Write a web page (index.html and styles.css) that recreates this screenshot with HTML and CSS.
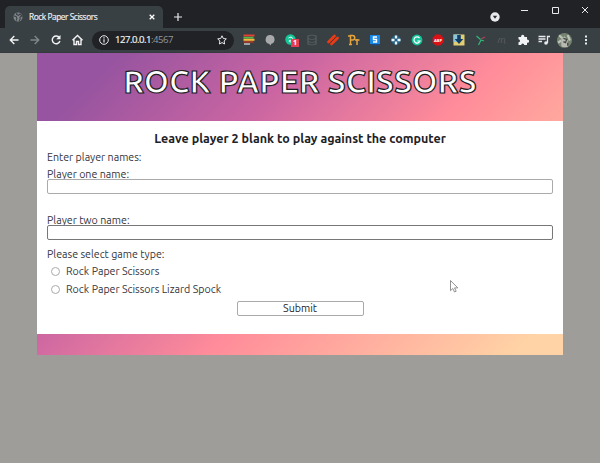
FILE: index.html
```html
<!DOCTYPE html>
<html lang="en">
<head>
<meta charset="utf-8">
<title>Rock Paper Scissors</title>
<link rel="stylesheet" href="styles.css">
</head>
<body>
<div class="browser">
  <div class="tabs">
    <div class="tab">
      <svg class="globe" viewBox="0 0 10 10"><circle cx="5" cy="5" r="4.5" fill="#80868b"/><path d="M1 4l2 .4 1 1.6-.8 2.6M4 .8l-.5 1.7 2 .8L7 2l2 2-2 1 .2 2L6 9" fill="none" stroke="#394043" stroke-width="1.1"/></svg>
      <span class="tab-title">Rock Paper Scissors</span>
      <svg class="close" viewBox="0 0 6 6"><path d="M.7.7l4.6 4.6M5.3.7L.7 5.3" stroke="#fff" stroke-width="1.3"/></svg>
    </div>
    <svg class="plus" viewBox="0 0 8 8"><path d="M4 0v8M0 4h8" stroke="#e8eaed" stroke-width="1.2"/></svg>
    <svg class="media" viewBox="0 0 10 10"><circle cx="5" cy="5" r="4.7" fill="#e8eaed"/><path d="M2.8 3.8h4.4L5 6.8z" fill="#292b2e"/></svg>
    <svg class="wincontrols" viewBox="0 0 70 8"><path d="M0 4.500h7M31.500 1.500h6v6h-6zM61 1l6 6M67 1l-6 6" fill="none" stroke="#e8eaed" stroke-width="1"/></svg>
  </div>
  <div class="toolbar">
    <svg class="nav" viewBox="0 0 78 12"><g fill="none" stroke-width="1.4"><path d="M9.5 6H1.5M5.3 2L1.3 6l4 4" stroke="#f1f3f4"/><path d="M21.500 6h8M25.700 2l4 4-4 4" stroke="#80868b"/><path d="M50.400 3.700A3.900 3.900 0 1 0 50.900 7" stroke="#f1f3f4"/><path d="M63.500 6.300L68.500 1.500l5 4.800M65 5.500v5h2.500v-3h2v3H72v-5" stroke="#f1f3f4"/></g><path d="M51.500 1v4.300h-4.300z" fill="#f1f3f4"/></svg>
    <div class="address">
      <svg class="info" viewBox="0 0 10 10"><circle cx="5" cy="5" r="4.300" fill="none" stroke="#e8eaed"/><path d="M5 4.300v3.200M5 2.300v1.200" stroke="#e8eaed" stroke-width="1.200"/></svg>
      <span class="host">127.0.0.1</span><span class="port">:4567</span>
      <svg class="star" viewBox="0 0 10 10"><path d="M5 .8l1.300 2.700 3 .4-2.200 2.100.5 3L5 7.600 2.400 9l.5-3L.7 3.900l3-.4z" fill="none" stroke="#e8eaed"/></svg>
    </div>
    <div class="extensions">
      <svg viewBox="0 0 12 12"><path d="M.5 1.500h11" stroke="#e34133" stroke-width="2"/><path d="M.5 3.700h10" stroke="#51b948" stroke-width="1.700"/><path d="M.5 5.800h11" stroke="#f5b83d" stroke-width="2"/><path d="M.5 7.900h10" stroke="#b63a25" stroke-width="1.500"/><path d="M1 10h6" stroke="#c4c4c4" stroke-width="1.500"/></svg>
      <svg viewBox="0 0 12 12"><path d="M6 1a4.500 4.500 0 0 0-1.200 8.800L7 11.500V9.900A4.500 4.500 0 0 0 6 1" fill="#a7a9ab"/></svg>
      <span class="badged"><svg viewBox="0 0 12 12"><circle cx="5.500" cy="5.500" r="5.200" fill="#14c596"/><path d="M3.500 4c3-2 5 0 3.500 1.500S4 6 4 7s2 1.500 3.500 0" fill="none" stroke="#fff"/></svg><b>1</b></span>
      <svg viewBox="0 0 12 12"><path d="M2 2c2-1 6-1 8 0v8c-2 1-6 1-8 0zM2 4.500c2 1 6 1 8 0M2 7.500c2 1 6 1 8 0" fill="none" stroke="#595d60" stroke-width="1.200"/></svg>
      <svg viewBox="0 0 12 12"><path d="M1.500 8L7.500 2M4.500 10L10.500 4" fill="none" stroke="#e83b17" stroke-width="2.700" stroke-linecap="round"/><path d="M3.500 8.500L8.500 3.500" stroke="#6b2418" stroke-width=".7"/></svg>
      <svg viewBox="0 0 12 12"><path d="M2.500 11V1.500h2c3 0 3 4.500 0 4.500h-2M7 6h4.500M9 5v6M0 2h3M1 10.500h3" fill="none" stroke="#e8a33b" stroke-width="1.500"/></svg>
      <svg viewBox="0 0 12 12"><path d="M1 1h10v9H1z" fill="#1689e8"/><path d="M8 3H4.500v2.500h3V8H4" fill="none" stroke="#fff" stroke-width="1.400"/><path d="M2 10.800h9" stroke="#124d95"/></svg>
      <svg viewBox="0 0 12 12"><circle cx="6" cy="6" r="4.700" fill="#246083"/><path d="M6 1.500v3M6 7.500v3M1.500 6h3M7.500 6h3" stroke="#e8f5fa" stroke-width="2.300"/></svg>
      <svg viewBox="0 0 12 12"><circle cx="6" cy="6" r="5.400" fill="#15c39a"/><path d="M8.500 4A3.100 3.100 0 1 0 9 7H6.300" fill="none" stroke="#fff" stroke-width="1.200"/></svg>
      <svg viewBox="0 0 12 12"><path d="M3.800.6h4.400l3.200 3.200v4.400l-3.200 3.200H3.800L.6 8.200V3.800z" fill="#dc1015"/><text class="abp" x="6" y="7.600" text-anchor="middle">ABP</text></svg>
      <svg viewBox="0 0 12 12"><path d="M.5.5h11v11H.5z" fill="#e3ce71"/><path d="M.5.500H6V8H.5z" fill="#8bc6dc"/><path d="M4.200 1h3.600v4h2.500L6 10 1.700 5h2.500z" fill="#123e65"/></svg>
      <svg viewBox="0 0 12 12"><path d="M1.500 2l4 3.500M6 6l-2.500 5M6 6l3 1" fill="none" stroke="#30b878" stroke-width="1.200"/><path d="M6 5l4-2" stroke="#ad4158" stroke-width="1.200"/></svg>
      <svg viewBox="0 0 12 12"><path d="M2 9l1.500-5M3.200 5.500c2-2 3-1 2.500.5L5 9M5.800 5.500c2-2 3.500-1 3 .5L8 9h1.500" fill="none" stroke="#54585b"/></svg>
      <svg viewBox="0 0 12 12"><path d="M1.500 3h2.700a1.600 1.600 0 1 1 3 0H10v2.700a1.600 1.600 0 1 1 0 3V11H7.200a1.500 1.500 0 0 0-3 0H1.500V8.300a1.500 1.500 0 0 0 0-3z" fill="#f1f3f4"/></svg>
      <svg viewBox="0 0 12 12"><path d="M.5 2.500h7M.5 5h7M.5 7.500H4M9.500 9V2.500H12" fill="none" stroke="#e8eaed" stroke-width="1.300"/><circle cx="8" cy="9" r="1.800" fill="#e8eaed"/></svg>
      <svg class="avatar" viewBox="0 0 14 14"><circle cx="7" cy="7" r="7" fill="#758371"/><path d="M2 2l3 3M10 2l2 5M1 9l3-2" stroke="#bcc6b8" stroke-width="2"/><path d="M4 12V6l3-3 3 4v6H5z" fill="#b9b8b3"/><path d="M6 5l3 1-1 3-2-1M10 9v3" fill="none" stroke="#40453d" stroke-width="1.200"/></svg>
      <svg viewBox="0 0 12 12"><path d="M5 1.500h2v2H5zM5 5h2v2H5zM5 8.500h2v2H5z" fill="#e8eaed"/></svg>
    </div>
  </div>
</div>
<main class="page">
  <header class="banner"><h1>ROCK PAPER SCISSORS</h1></header>
  <form class="content">
    <h2>Leave player 2 blank to play against the computer</h2>
    <p class="intro">Enter player names:</p>
    <label class="field"><span>Player one name:</span><input class="text" type="text"></label>
    <label class="field second"><span>Player two name:</span><input class="text active" type="text"></label>
    <p class="game">Please select game type:</p>
    <label class="choice"><input type="radio" name="game"><span>Rock Paper Scissors</span></label>
    <label class="choice"><input type="radio" name="game"><span>Rock Paper Scissors Lizard Spock</span></label>
    <button type="button">Submit</button>
  </form>
</main>
<svg class="cursor" viewBox="0 0 9 13"><path d="M.5.5v10.200l2.300-2.200 1.700 3.500 1.700-.8-1.700-3.300h3.300z" fill="#fff" stroke="#777" stroke-width=".8"/></svg>
</body>
</html>
```
FILE: styles.css
```css
* { box-sizing: border-box; }
body { margin: 0; height: 463px; overflow: hidden; background: #9e9d9a; color: #33343c; font: 10.67px/14px Ubuntu, "Noto Sans", sans-serif; }
svg { display: block; flex: none; }
h1, h2, p { margin: 0; font-weight: inherit; }
.browser { height: 53px; background: #202225; font-family: "Open Sans", sans-serif; }
.tabs { height: 28px; padding-left: 5px; display: flex; align-items: flex-end; }
.tab { width: 158px; height: 22px; padding: 0 8px; display: flex; align-items: center; background: #394043; border-radius: 5px 5px 0 0; }
.globe { width: 10px; height: 10px; }
.tab-title { margin-left: 6px; color: #f1f3f4; font-size: 8.3px; letter-spacing: -.43px; white-space: nowrap; -webkit-text-stroke: .15px #f1f3f4; }
.close { width: 6px; height: 6px; margin-left: auto; }
.plus { width: 8px; height: 8px; margin: 0 0 7px 11px; }
.media { width: 10px; height: 10px; margin: 0 0 6px 308px; }
.wincontrols { width: 70px; height: 8px; margin: 0 0 14px 21px; }
.toolbar { height: 25px; padding-left: 9px; display: flex; align-items: center; background: #394043; border-bottom: 1px solid #343a3d; }
.nav { width: 78px; height: 12px; }
.address { flex: none; width: 142px; height: 19px; margin-left: 5px; padding: 0 7px; display: flex; align-items: center; border-radius: 10px; background: #202225; font-size: 9.6px; letter-spacing: -.5px; }
.info { width: 10px; height: 10px; margin-right: 6px; }
.host { color: #f1f3f4; -webkit-text-stroke: .2px #f1f3f4; }
.port { color: #93989d; }
.star { width: 10px; height: 10px; margin-left: auto; }
.extensions { margin-left: 9px; display: flex; gap: 9.05px; align-items: center; }
.extensions svg { width: 12px; height: 12px; }
.extensions .avatar { width: 15px; height: 15px; margin: 0 -1.5px; }
.badged { position: relative; }
.badged b { position: absolute; left: 6px; top: 5px; width: 8px; height: 8px; background: #e43e54; color: white; font-size: 7px; line-height: 8px; text-align: center; }
.abp { fill: white; font-size: 4px; font-weight: bold; }
.page { width: 526px; height: 302px; margin: 0 auto; background: linear-gradient(135deg, #9754a0 10%, #ca65a2 33%, #ff8c9a 57%, #ffd3a5 94%); }
.banner { height: 68px; display: flex; align-items: center; justify-content: center; padding-bottom: 12px; }
h1 { color: white; font-size: 32px; line-height: 40px; font-weight: 700; letter-spacing: .05px; white-space: nowrap; -webkit-text-stroke: 1.2px #202022; }
.content { height: 213px; padding: 8px 10px 0; background: white; display: flex; flex-direction: column; }
h2 { text-align: center; font-size: 12.5px; line-height: 18px; font-weight: 600; color: #202126; white-space: nowrap; }
.intro { margin-top: 3px; }
.field { margin-top: 3px; display: flex; flex-direction: column; align-items: flex-start; }
.text { width: 506px; height: 15px; margin: -2px 0 1px; border: 1px solid #aaa; border-radius: 2px; background: transparent; padding: 0; outline: 0; }
.second { margin-top: 18px; }
.active { border-color: #777; }
.game { margin-top: 6px; margin-bottom: 1px; }
.choice { height: 18px; display: flex; align-items: center; gap: 6px; }
.choice input { width: 9px; height: 9px; margin: 0 0 0 4px; appearance: none; border: 1px solid #aaa; border-radius: 50%; background: white; }
button { width: 127px; height: 15px; margin: 3px auto 0; padding: 0; border: 1px solid #aaa; border-radius: 2px; background: white; color: #202126; font: inherit; line-height: 13px; }
.cursor { position: absolute; left: 450px; top: 280px; width: 9px; height: 13px; }
```
